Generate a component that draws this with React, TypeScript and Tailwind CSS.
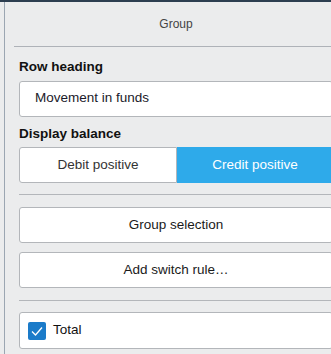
import React from 'react';

function FieldLabel({ children, className = '' }: { children: React.ReactNode; className?: string }) {
  return (
    <div className={`text-[13.5px] leading-[16px] font-bold text-[#111] ${className}`}>{children}</div>
  );
}

function PanelButton({ label, className = '' }: { label: string; className?: string }) {
  return (
    <button
      className={`flex h-[36px] w-full items-center justify-center rounded-[3px] border border-[#b3b6ba] bg-white text-[13.5px] text-[#1a1a1a] ${className}`}
    >
      {label}
    </button>
  );
}

export default function App() {
  return (
    <div className="flex h-[354px] w-[331px] flex-col overflow-hidden bg-[#ebeced] font-['Liberation_Sans',Arial,sans-serif]">
      {/* Top bar */}
      <div className="h-[2px] bg-[#2d3e50]" />

      <div className="ml-[4px] w-[343px] flex-1 border-l border-[#9ba6b2]">
        {/* Header */}
        <div className="flex h-[44px] items-center justify-center text-[12px] text-[#444]">Group</div>
        <div className="mx-[9px] h-px bg-[#aeb2b8]" />

        {/* Content */}
        <div className="px-[14px] pt-[12px]">
          <FieldLabel className="mb-[6px]">Row heading</FieldLabel>
          <div className="flex h-[36px] items-center rounded-[3px] border border-[#b3b6ba] bg-white px-[15px] pb-[2px] text-[13.5px] text-[#1a1a2a]">
            Movement in funds
          </div>

          <FieldLabel className="mt-[9px] mb-[5px]">Display balance</FieldLabel>
          <div className="flex h-[36px]">
            <button className="flex flex-1 items-center justify-center rounded-l-[3px] border border-[#b3b6ba] bg-white text-[13.5px] text-[#333]">
              Debit positive
            </button>
            <button className="flex flex-1 items-center justify-center rounded-r-[3px] bg-[#2eaaea] text-[13.5px] text-white">
              Credit positive
            </button>
          </div>

          <div className="mt-[11px] h-px bg-[#b3b6ba]" />

          <PanelButton label="Group selection" className="mt-[12px]" />
          <PanelButton label="Add switch rule…" className="mt-[9px]" />

          <div className="mt-[12px] h-px bg-[#b3b6ba]" />

          {/* Total checkbox */}
          <label className="mt-[11px] flex h-[37px] items-center gap-[7px] rounded-[3px] border border-[#b3b6ba] bg-white pl-[8px] text-[13.5px] text-[#111]">
            <span className="flex h-[18px] w-[18px] items-center justify-center rounded-[2px] bg-[#1b7bc9]">
              <svg width="18" height="18" viewBox="0 0 18 18" fill="none">
                <polyline points="4,9.5 7.5,13 14,5.5" stroke="white" strokeWidth="1.3" />
              </svg>
            </span>
            Total
          </label>
        </div>
      </div>
    </div>
  );
}
